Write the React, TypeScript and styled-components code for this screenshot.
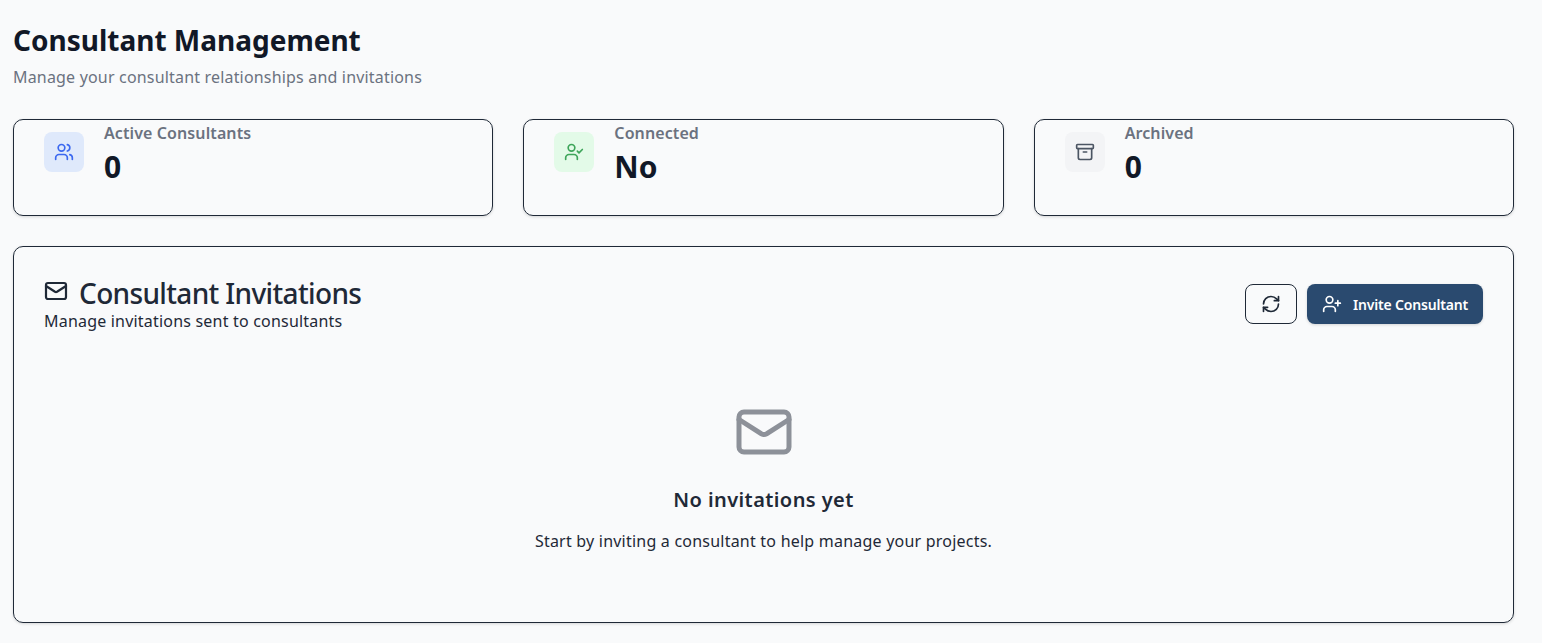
import React from "react";
import styled, { createGlobalStyle } from "styled-components";
import { Users, UserCheck, Archive, Mail, RefreshCw, UserPlus } from "lucide-react";

const Global = createGlobalStyle`
  html, body { margin: 0; padding: 0; background: #f9fafb; height: 100%; overflow: hidden; }
  body { font-family: "Noto Sans", "Open Sans", sans-serif; color: #111827; }
`;

const Page = styled.div`
  width: 1501px;
  padding: 22px 0 0 13px;
  display: flex;
  flex-direction: column;
`;

const Title = styled.h1`
  margin: 0;
  font-size: 28px;
  line-height: 36px;
  font-weight: 700;
  color: #111827;
`;

const Subtitle = styled.p`
  margin: 7px 0 0;
  font-size: 16px;
  letter-spacing: 0.18px;
  line-height: 24px;
  color: #6b7280;
`;

const Stats = styled.div`
  display: grid;
  grid-template-columns: repeat(3, 1fr);
  gap: 30px;
  margin-top: 30px;
`;

const StatCard = styled.div`
  box-sizing: border-box;
  height: 97px;
  border: 1px solid #1f2937;
  border-radius: 10px;
  box-shadow: 0 1px 3px rgba(0, 0, 0, 0.15);
  padding: 12px 30px;
  display: flex;
  gap: 20px;
  align-items: flex-start;
`;

const IconTile = styled.div<{ $bg: string; $fg: string }>`
  width: 40px;
  height: 40px;
  border-radius: 8px;
  background: ${(p) => p.$bg};
  color: ${(p) => p.$fg};
  display: flex;
  align-items: center;
  justify-content: center;
  flex: none;
`;

const StatText = styled.div`
  display: flex;
  flex-direction: column;
  margin-top: -11px;
`;

const StatLabel = styled.span`
  font-size: 16px;
  line-height: 24px;
  font-weight: 600;
  letter-spacing: 0.1px;
  color: #6b7280;
  margin-bottom: 4px;
`;

const StatValue = styled.span`
  font-size: 30px;
  line-height: 36px;
  font-weight: 700;
  color: #111827;
`;

const Panel = styled.section`
  box-sizing: border-box;
  height: 377px;
  margin-top: 30px;
  border: 1px solid #1f2937;
  border-radius: 10px;
  box-shadow: 0 1px 3px rgba(0, 0, 0, 0.15);
  padding: 30px 30px 0;
  display: flex;
  flex-direction: column;
`;

const PanelHead = styled.div`
  display: flex;
  justify-content: space-between;
  align-items: center;
`;

const PanelTitleRow = styled.div`
  display: flex;
  align-items: center;
  gap: 11px;
  font-size: 28px;
  letter-spacing: -0.65px;
  line-height: 32px;
  font-weight: 500;
  color: #1f2937;
`;

const PanelTitleIcon = styled.span`
  display: flex;
  margin-top: -4px;
`;

const PanelSub = styled.div`
  font-size: 16px;
  letter-spacing: 0.2px;
  line-height: 24px;
  color: #1f2937;
`;

const Actions = styled.div`
  display: flex;
  gap: 10px;
  margin-top: -2px;
`;

const IconButton = styled.button`
  box-sizing: border-box;
  width: 52px;
  height: 40px;
  background: transparent;
  border: 1px solid #1f2937;
  border-radius: 8px;
  color: #1f2937;
  display: flex;
  align-items: center;
  justify-content: center;
  padding: 0;
`;

const PrimaryButton = styled.button`
  box-sizing: border-box;
  width: 176px;
  height: 40px;
  background: #2a4a6f;
  border: none;
  border-radius: 8px;
  color: #fff;
  box-shadow: 0 1px 3px rgba(0, 0, 0, 0.15);
  display: flex;
  align-items: center;
  justify-content: center;
  gap: 11px;
  font: 600 14px "Noto Sans", sans-serif;
  letter-spacing: -0.17px;
  padding: 0;
`;

const Empty = styled.div`
  display: flex;
  flex-direction: column;
  align-items: center;
  margin-top: 69px;
  color: #1f2937;
`;

const EmptyIcon = styled.span`
  color: #8d9199;
  display: flex;
`;

const EmptyTitle = styled.h3`
  margin: 24px 0 0;
  font-size: 20px;
  letter-spacing: 0.42px;
  line-height: 28px;
  font-weight: 600;
  color: #1f2937;
`;

const EmptyText = styled.p`
  margin: 15px 0 0;
  font-size: 16px;
  letter-spacing: 0.22px;
  line-height: 24px;
  color: #1f2937;
`;

export default function App() {
  return (
    <>
      <Global />
      <Page>
        <Title>Consultant Management</Title>
        <Subtitle>Manage your consultant relationships and invitations</Subtitle>
        <Stats>
          <StatCard>
            <IconTile $bg="#dfe9fb" $fg="#3b68f0"><Users size={20} /></IconTile>
            <StatText><StatLabel>Active Consultants</StatLabel><StatValue>0</StatValue></StatText>
          </StatCard>
          <StatCard>
            <IconTile $bg="#e3fae8" $fg="#3ea55a"><UserCheck size={20} /></IconTile>
            <StatText><StatLabel>Connected</StatLabel><StatValue>No</StatValue></StatText>
          </StatCard>
          <StatCard>
            <IconTile $bg="#f3f4f6" $fg="#4b5563"><Archive size={20} /></IconTile>
            <StatText><StatLabel>Archived</StatLabel><StatValue>0</StatValue></StatText>
          </StatCard>
        </Stats>
        <Panel>
          <PanelHead>
            <div>
              <PanelTitleRow>
                <PanelTitleIcon><Mail size={24} strokeWidth={2.2} /></PanelTitleIcon>
                Consultant Invitations
              </PanelTitleRow>
              <PanelSub>Manage invitations sent to consultants</PanelSub>
            </div>
            <Actions>
              <IconButton><RefreshCw size={20} /></IconButton>
              <PrimaryButton><UserPlus size={20} />Invite Consultant</PrimaryButton>
            </Actions>
          </PanelHead>
          <Empty>
            <EmptyIcon><Mail size={60} /></EmptyIcon>
            <EmptyTitle>No invitations yet</EmptyTitle>
            <EmptyText>Start by inviting a consultant to help manage your projects.</EmptyText>
          </Empty>
        </Panel>
      </Page>
    </>
  );
}
